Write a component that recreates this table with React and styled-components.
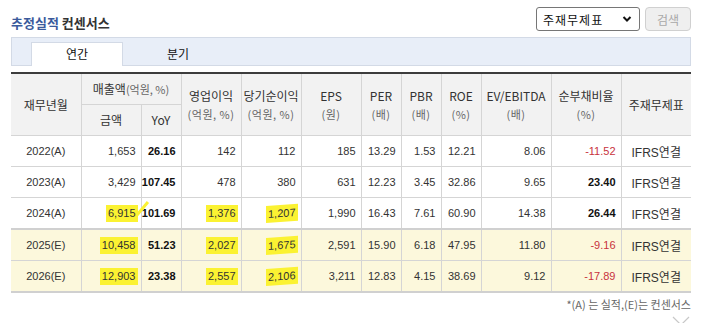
import React from 'react'
import styled, { createGlobalStyle } from 'styled-components'

const GlobalStyle = createGlobalStyle`
  body {
    margin: 0;
    background: #fff;
    font-family: "Liberation Sans", "Noto Sans CJK KR", sans-serif;
    color: #333;
  }
`

const cols = [70, 60, 40, 60, 60, 60, 40, 40, 40, 70, 70, 70]

const rows = [
  { year: '2022(A)', sales: '1,653', yoy: '26.16', op: '142', net: '112', eps: '185', per: '13.29', pbr: '1.53', roe: '12.21', ev: '8.06', debt: '-11.52' },
  { year: '2023(A)', sales: '3,429', yoy: '107.45', op: '478', net: '380', eps: '631', per: '12.23', pbr: '3.45', roe: '32.86', ev: '9.65', debt: '23.40' },
  { year: '2024(A)', sales: '6,915', yoy: '101.69', op: '1,376', net: '1,207', eps: '1,990', per: '16.43', pbr: '7.61', roe: '60.90', ev: '14.38', debt: '26.44', mark: true, stroke: true },
  { year: '2025(E)', sales: '10,458', yoy: '51.23', op: '2,027', net: '1,675', eps: '2,591', per: '15.90', pbr: '6.18', roe: '47.95', ev: '11.80', debt: '-9.16', est: true, mark: true },
  { year: '2026(E)', sales: '12,903', yoy: '23.38', op: '2,557', net: '2,106', eps: '3,211', per: '12.83', pbr: '4.15', roe: '38.69', ev: '9.12', debt: '-17.89', est: true, mark: true },
]

export default function App() {
  return (
    <Page>
      <GlobalStyle />
      <TopBar>
        <Title><em>추정실적</em> 컨센서스</Title>
        <Controls>
          <Select>
            <span>주재무제표</span>
            <svg width="10" height="8" viewBox="0 0 10 8">
              <path d="M1.5 2 L5 5.5 L8.5 2" fill="none" stroke="#111" strokeWidth="2" />
            </svg>
          </Select>
          <SearchButton>검색</SearchButton>
        </Controls>
      </TopBar>

      <TabBar>
        <Tab $active>연간</Tab>
        <Tab>분기</Tab>
      </TabBar>

      <Table>
        <colgroup>
          {cols.map((w, i) => <col key={i} style={{ width: w }} />)}
        </colgroup>
        <thead>
          <tr>
            <Th rowSpan={2}>재무년월</Th>
            <Th colSpan={2}>매출액<Sub $inline>(억원, %)</Sub></Th>
            <Th rowSpan={2}>영업이익<Sub>(억원, %)</Sub></Th>
            <Th rowSpan={2}>당기순이익<Sub>(억원, %)</Sub></Th>
            <Th rowSpan={2}>EPS<Sub>(원)</Sub></Th>
            <Th rowSpan={2}>PER<Sub>(배)</Sub></Th>
            <Th rowSpan={2}>PBR<Sub>(배)</Sub></Th>
            <Th rowSpan={2}>ROE<Sub>(%)</Sub></Th>
            <Th rowSpan={2}>EV/EBITDA<Sub>(배)</Sub></Th>
            <Th rowSpan={2}>순부채비율<Sub>(%)</Sub></Th>
            <Th rowSpan={2}>주재무제표</Th>
          </tr>
          <tr>
            <Th>금액</Th>
            <Th>YoY</Th>
          </tr>
        </thead>
        <tbody>
          {rows.map((r, i) => (
            <Row key={r.year} $est={r.est} $first={r.est && !rows[i - 1].est}>
              <Td $center>{r.year}</Td>
              <Td>{r.mark ? <Mark $stroke={r.stroke}>{r.sales}</Mark> : r.sales}</Td>
              <Td $bold>{r.yoy}</Td>
              <Td>{r.mark ? <Mark>{r.op}</Mark> : r.op}</Td>
              <Td>{r.mark ? <Mark $tilt>{r.net}</Mark> : r.net}</Td>
              <Td>{r.eps}</Td>
              <Td>{r.per}</Td>
              <Td>{r.pbr}</Td>
              <Td>{r.roe}</Td>
              <Td>{r.ev}</Td>
              <Td $neg={r.debt.startsWith('-')} $bold={!r.debt.startsWith('-')}>{r.debt}</Td>
              <Td $center $kr>IFRS연결</Td>
            </Row>
          ))}
        </tbody>
      </Table>

      <Note>*(A) 는 실적,(E)는 컨센서스</Note>
      <More>
        <svg width="18" height="10" viewBox="0 0 18 10">
          <path d="M1 1 L9 9 L17 1" fill="none" stroke="#c8c8c8" strokeWidth="1.2" />
        </svg>
      </More>
    </Page>
  )
}

const Page = styled.div`
  width: 680px;
  padding: 0 14px 0 11px;
`

const TopBar = styled.div`
  display: flex;
  justify-content: space-between;
  align-items: flex-start;
  height: 37px;
  padding-top: 7px;
  box-sizing: border-box;
`

const Title = styled.h2`
  margin: 6px 0 0;
  font-family: "Noto Sans CJK KR", sans-serif;
  font-size: 13px;
  font-weight: 700;
  color: #333;
  em {
    font-style: normal;
    color: #3a5a9c;
  }
`

const Controls = styled.div`
  display: flex;
  gap: 5px;
`

const Select = styled.div`
  width: 104px;
  height: 24px;
  box-sizing: border-box;
  border: 1px solid #767676;
  border-radius: 3px;
  display: flex;
  align-items: center;
  justify-content: space-between;
  padding: 0 7px 0 6px;
  font-family: "Noto Sans CJK KR", sans-serif;
  font-size: 12px;
  letter-spacing: 1px;
  color: #111;
  background: #fff;
`

const SearchButton = styled.button`
  width: 46px;
  height: 24px;
  border: 1px solid #d0d0d0;
  border-radius: 4px;
  background: #efefef;
  color: #a8a8a8;
  font-family: "Noto Sans CJK KR", sans-serif;
  font-size: 12px;
  padding: 0;
`

const TabBar = styled.div`
  display: flex;
  height: 29px;
  box-sizing: border-box;
  padding: 4px 0 0 19px;
  background: #e8eef8;
  border: 1px solid #d3dae6;
`

const Tab = styled.div`
  width: ${p => (p.$active ? '92px' : '110px')};
  box-sizing: border-box;
  display: flex;
  align-items: center;
  justify-content: center;
  margin-bottom: -1px;
  font-family: "Noto Sans CJK KR", sans-serif;
  font-size: 12px;
  color: #111;
  background: ${p => (p.$active ? '#fff' : 'transparent')};
  border: 1px solid ${p => (p.$active ? '#d3dae6' : 'transparent')};
  border-bottom: none;
  padding-bottom: 2px;
`

const Table = styled.table`
  margin-top: 6px;
  width: 680px;
  table-layout: fixed;
  border-collapse: collapse;
  border-top: 2px solid #3c3c3c;
  border-bottom: 2px solid #d0d0d0;
`

const Th = styled.th`
  height: 30px;
  padding: 0;
  background: #f2f2f2;
  border: 1px solid #d5d5d5;
  border-top: none;
  font-family: "Noto Sans CJK KR", sans-serif;
  font-size: 12px;
  font-weight: 400;
  color: #333;
  line-height: 18px;
  white-space: nowrap;
  &:first-child { border-left: none; }
  &:last-child { border-right: none; }
`

const Sub = styled.span`
  display: ${p => (p.$inline ? 'inline' : 'block')};
  font-size: 11px;
  color: #666;
  letter-spacing: ${p => (p.$inline ? '0' : '0.5px')};
`

const Row = styled.tr`
  background: ${p => (p.$est ? '#fcf8dc' : '#fff')};
  border-top: ${p => (p.$first ? '2px solid #d0d0d0' : 'none')};
`

const Td = styled.td`
  height: 30px;
  padding: 0 5px 0 0;
  border: 1px solid #d5d5d5;
  text-align: ${p => (p.$center ? 'center' : 'right')};
  font-family: ${p => (p.$kr ? '"Liberation Sans", "Noto Sans CJK KR", sans-serif' : '"Liberation Sans", sans-serif')};
  font-size: ${p => (p.$kr ? '12px' : '11px')};
  font-weight: ${p => (p.$bold ? 700 : 400)};
  color: ${p => (p.$neg ? '#c8323c' : p.$bold ? '#111' : '#333')};
  white-space: nowrap;
  ${p => p.$center && 'padding: 0;'}
  &:first-child { border-left: none; }
  &:last-child { border-right: none; }
`

const Mark = styled.span`
  position: relative;
  display: inline-block;
  padding: 2px 2px 3px;
  margin-right: -2px;
  background: #fbf232;
  transform: ${p => (p.$tilt ? 'skewY(-4deg)' : 'none')};
  ${p => p.$stroke && `
    &::after {
      content: '';
      position: absolute;
      right: -6px;
      bottom: 5px;
      width: 3px;
      height: 17px;
      background: #fbf232;
      transform: rotate(40deg);
    }
  `}
`

const Note = styled.p`
  margin: 3px 0 0;
  text-align: right;
  font-family: "Noto Sans CJK KR", sans-serif;
  font-size: 11px;
  color: #666;
  line-height: 16px;
`

const More = styled.div`
  display: flex;
  justify-content: flex-end;
  margin-top: 4px;
  padding-right: 1px;
`
